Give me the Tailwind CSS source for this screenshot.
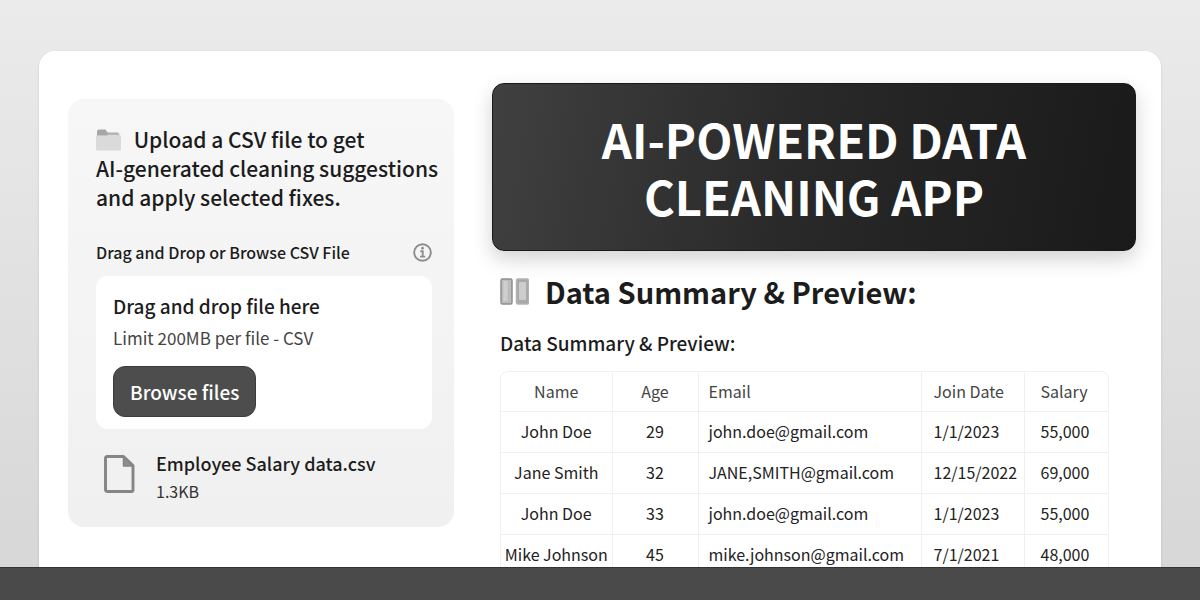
<!DOCTYPE html>
<html lang="en">
<head>
    <meta charset="UTF-8">
    <meta name="viewport" content="width=device-width, initial-scale=1.0">
    <title>AI-Powered Data Cleaning App</title>
    <script src="https://cdn.jsdelivr.net/npm/@tailwindcss/browser@4"></script>
</head>
<body class="flex flex-col h-screen overflow-hidden bg-linear-to-b from-[#ebebeb] to-[#d6d6d6] font-['Noto_Sans_CJK_SC',sans-serif] text-[#1c1c1c]">
    <main class="flex-1 min-h-0 overflow-hidden px-[39px] pt-[51px]">
        <div class="flex items-start gap-[38px] min-h-full bg-white rounded-t-2xl pl-[29px] pr-[25px] pt-8 shadow-sm">

            <!-- Upload panel -->
            <aside class="w-[386px] shrink-0 mt-4 rounded-2xl bg-linear-to-b from-[#f7f7f7] to-[#f0f0f0] pl-7 pr-[22px] pt-[26px] pb-6">
                <p class="text-[21px] leading-[29px] font-medium whitespace-nowrap">
                    <svg class="inline-block w-[25px] h-[22px] mr-2 -mt-1" viewBox="0 0 25 22" aria-hidden="true">
                        <path d="M1 2.500a2 2 0 0 1 2-2h6.500l2 3h10a1.500 1.500 0 0 1 1.500 1.500v4H1z" fill="#a6a6a6" />
                        <rect y="6" width="25" height="15.500" rx="1.500" fill="#dadada" />
                        <path d="M1 6.500h10l2-1.500h10.500" stroke="#c4c4c4" fill="none" />
                    </svg>
                    Upload a CSV file to get<br>
                    AI-generated cleaning suggestions<br>
                    and apply selected fixes.
                </p>

                <div class="flex items-center justify-between mt-7 h-6">
                    <label for="csvFile" class="text-[16px] leading-6 font-medium">Drag and Drop or Browse CSV File</label>
                    <button type="button" aria-label="About uploads">
                        <svg class="block w-[19px] h-[19px]" viewBox="0 0 19 19" fill="none" stroke="#8c8c8c" aria-hidden="true">
                            <circle cx="9.500" cy="9.500" r="8.300" stroke-width="1.900" />
                            <path d="M7.300 8.300h2.400v5M7 13.600h5.200" stroke-width="1.900" />
                            <circle cx="9.500" cy="5.200" r="1.400" fill="#8c8c8c" stroke="none" />
                        </svg>
                    </button>
                </div>

                <div class="mt-3 rounded-xl bg-white px-[17px] pt-4 pb-3">
                    <p class="text-[19px] leading-7 font-medium">Drag and drop file here</p>
                    <p class="mt-1 text-[17px] leading-7 text-[#444]">Limit 200MB per file - CSV</p>
                    <input type="file" id="csvFile" accept=".csv" class="hidden">
                    <button type="button" id="browseBtn" class="mt-[14px] h-[51px] px-4 rounded-xl border border-[#3c3c3c] bg-[#4d4d4d] text-[19px] leading-7 font-medium text-white">Browse files</button>
                </div>

                <!-- Uploaded file -->
                <div class="flex items-start gap-[21px] mt-[18px] pl-2">
                    <svg class="w-[31px] h-[38px] shrink-0 mt-2" viewBox="0 0 31 38" fill="none" aria-hidden="true">
                        <path d="M3 1.500h16.500L29 10.500V35a1.500 1.500 0 0 1-1.500 1.500h-24A2 2 0 0 1 1.500 34.500V3A1.500 1.500 0 0 1 3 1.500z" stroke="#858585" stroke-width="2.900" stroke-linejoin="round" />
                        <path d="M19.500 1.500v9.500H29z" fill="#8e8e8e" stroke="#858585" stroke-width="1.500" stroke-linejoin="round" />
                    </svg>
                    <div>
                        <p class="text-[18px] leading-8 font-medium">Employee Salary data.csv</p>
                        <p class="text-[16px] leading-6 text-[#333]">1.3KB</p>
                    </div>
                </div>
            </aside>

            <!-- Results -->
            <section class="flex-1 min-w-0">
                <h1 class="rounded-xl border border-[#1a1a1a] bg-linear-100 from-[#404040] via-[#282828] to-[#1a1a1a] py-[26px] text-center text-[47px] leading-[57px] font-bold text-white shadow-[0_8px_20px_rgba(0,0,0,0.18)]">AI-POWERED DATA<br>CLEANING APP</h1>

                <div class="pl-2 pr-[27px]">
                    <h2 class="flex items-center gap-4 mt-[18px] text-[29px] leading-[44px] font-bold">
                        <svg class="w-[29px] h-[27px]" viewBox="0 0 29 27" aria-hidden="true">
                            <rect x="1" y="1" width="11" height="25" rx="1.500" fill="#bcbcbc" stroke="#8f8f8f" stroke-width="1.500" />
                            <rect x="3.500" y="3" width="4" height="20" fill="#cfcfcf" />
                            <rect x="16.500" y="1" width="12" height="25" rx="1.500" fill="#a9a9a9" stroke="#b2b2b2" stroke-width="1.500" />
                            <rect x="19" y="4" width="7" height="18" rx="1" fill="#cdcdcd" />
                        </svg>
                        Data Summary &amp; Preview:
                    </h2>
                    <h3 class="mt-4 text-[19px] leading-7 font-medium">Data Summary &amp; Preview:</h3>

                    <div class="mt-[14px] rounded-lg border border-[#f0f0f0]">
                        <table class="w-full table-fixed text-[16px] leading-6 text-[#222] whitespace-nowrap">
                            <thead>
                                <tr class="h-[39px] text-[#444]">
                                    <th class="w-[111px] border-r border-[#f0f0f0] font-normal">Name</th>
                                    <th class="w-[86px] border-r border-[#f0f0f0] font-normal">Age</th>
                                    <th class="border-r border-[#f0f0f0] pl-[10px] text-left font-normal">Email</th>
                                    <th class="w-[103px] border-r border-[#f0f0f0] pl-3 text-left font-normal">Join Date</th>
                                    <th class="w-[84px] pl-4 text-left font-normal">Salary</th>
                                </tr>
                            </thead>
                            <tbody>
                                <tr class="h-[41px] border-t border-[#f0f0f0]">
                                    <td class="border-r border-[#f0f0f0] pb-0.5 text-center">John Doe</td>
                                    <td class="border-r border-[#f0f0f0] pb-0.5 text-center">29</td>
                                    <td class="border-r border-[#f0f0f0] pb-0.5 pl-[10px]">john.doe@gmail.com</td>
                                    <td class="border-r border-[#f0f0f0] pb-0.5 pl-3">1/1/2023</td>
                                    <td class="pb-0.5 pl-4">55,000</td>
                                </tr>
                                <tr class="h-[41px] border-t border-[#f0f0f0]">
                                    <td class="border-r border-[#f0f0f0] pb-0.5 text-center">Jane Smith</td>
                                    <td class="border-r border-[#f0f0f0] pb-0.5 text-center">32</td>
                                    <td class="border-r border-[#f0f0f0] pb-0.5 pl-[10px]">JANE,SMITH@gmail.com</td>
                                    <td class="border-r border-[#f0f0f0] pb-0.5 pl-3">12/15/2022</td>
                                    <td class="pb-0.5 pl-4">69,000</td>
                                </tr>
                                <tr class="h-[41px] border-t border-[#f0f0f0]">
                                    <td class="border-r border-[#f0f0f0] pb-0.5 text-center">John Doe</td>
                                    <td class="border-r border-[#f0f0f0] pb-0.5 text-center">33</td>
                                    <td class="border-r border-[#f0f0f0] pb-0.5 pl-[10px]">john.doe@gmail.com</td>
                                    <td class="border-r border-[#f0f0f0] pb-0.5 pl-3">1/1/2023</td>
                                    <td class="pb-0.5 pl-4">55,000</td>
                                </tr>
                                <tr class="h-[41px] border-t border-[#f0f0f0]">
                                    <td class="border-r border-[#f0f0f0] pb-0.5 text-center">Mike Johnson</td>
                                    <td class="border-r border-[#f0f0f0] pb-0.5 text-center">45</td>
                                    <td class="border-r border-[#f0f0f0] pb-0.5 pl-[10px]">mike.johnson@gmail.com</td>
                                    <td class="border-r border-[#f0f0f0] pb-0.5 pl-3">7/1/2021</td>
                                    <td class="pb-0.5 pl-4">48,000</td>
                                </tr>
                            </tbody>
                        </table>
                    </div>
                </div>
            </section>
        </div>
    </main>

    <footer class="h-[33px] shrink-0 border-t border-[#333] bg-[#4a4a4a]"></footer>

    <script>
        document.getElementById('browseBtn').addEventListener('click', () => {
            document.getElementById('csvFile').click();
        });
    </script>
</body>
</html>
